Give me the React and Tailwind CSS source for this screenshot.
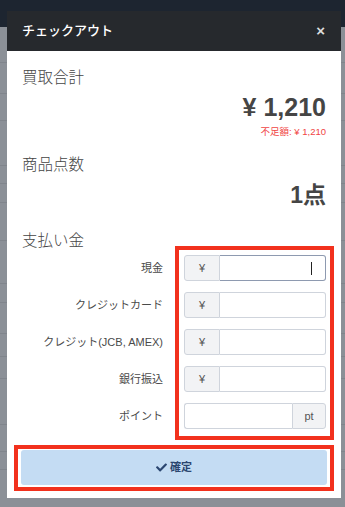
import React from "react";
import { FaCheck } from "react-icons/fa";

const font = { fontFamily: '"Liberation Sans", "Noto Sans CJK JP", sans-serif' };

function Row({ label, addon = "¥", after = false, focused = false }) {
  return (
    <div className="flex items-center h-[26px]">
      <div className="w-[141px] text-right text-[11px] text-[#4a4a4a]">{label}</div>
      <div className="ml-[21px] flex h-[26px] w-[142px]">
        {!after && (
          <div className="w-[36px] flex items-center justify-center bg-[#f2f3f5] border border-[#cfd4dc] rounded-l-[3px] text-[11px] text-[#555]">
            {addon}
          </div>
        )}
        <div
          className={
            "flex-1 relative border " +
            (focused ? "border-[#8e9ab0] " : "border-[#cfd4dc] ") +
            (after ? "rounded-l-[3px] border-r-0" : "rounded-r-[3px] border-l-0")
          }
        >
          {focused && <div className="absolute right-[13px] top-[6px] w-px h-[13px] bg-[#222]" />}
        </div>
        {after && (
          <div className="w-[34px] flex items-center justify-center bg-[#f2f3f5] border border-[#cfd4dc] rounded-r-[3px] text-[11px] text-[#555]">
            {addon}
          </div>
        )}
      </div>
    </div>
  );
}

export default function App() {
  return (
    <div className="relative w-[345px] h-[507px] overflow-hidden bg-[#8b9097]" style={font}>
      <div className="h-[27px] bg-[#1d2530]" />
      <div className="flex flex-col">
        {[62, 93, 120, 165, 183, 202, 240, 283, 302, 333, 356, 378, 424, 451, 469].map((y, i) => (
          <div key={i} className="absolute left-0 right-0 h-px bg-[#80858c]" style={{ top: y }} />
        ))}
      </div>

      <div className="absolute left-[7px] top-[11px] w-[334px] bg-white">
        <div className="h-[40px] bg-[#26292d] flex items-center justify-between px-[15px]">
          <span className="text-[13px] text-white font-medium">チェックアウト</span>
          <span className="text-[15px] text-[#ddd] font-bold mr-[1px]">×</span>
        </div>
        <div className="px-[15px] pt-[15px] pb-[13px]">
          <div className="text-[15.5px] leading-[24px] text-[#444] font-light">買取合計</div>
          <div className="text-right text-[25px] font-bold leading-[32px] text-[#454545] mt-[1px]">¥ 1,210</div>
          <div className="text-right text-[9.5px] leading-[12px] text-[#f04444] mt-[3px]">不足額: ¥ 1,210</div>
          <div className="text-[15.5px] leading-[24px] text-[#444] font-light mt-[15px]">商品点数</div>
          <div className="text-right text-[23px] font-bold leading-[32px] text-[#454545] mt-[2px]">1点</div>
          <div className="text-[15.5px] leading-[24px] text-[#444] font-light mt-[18px]">支払い金</div>
          <div className="flex flex-col gap-[11px] mt-[2px]">
            <Row label="現金" focused />
            <Row label="クレジットカード" />
            <Row label="クレジット(JCB, AMEX)" />
            <Row label="銀行振込" />
            <Row label="ポイント" addon="pt" after />
          </div>
          <div className="mt-[21px] -mx-[1px] h-[35px] bg-[#c4dcf3] rounded-[3px] flex items-center justify-center gap-[3px] text-[11px] font-bold text-[#2b4670]">
            <FaCheck className="w-[11px] h-[11px]" />
            <span>確定</span>
          </div>
        </div>

        <div className="absolute left-[168px] top-[235px] w-[159px] h-[194px] border-4 border-[#f2311d] pointer-events-none" />
        <div className="absolute left-[7px] top-[434px] w-[320px] h-[46px] border-4 border-[#f2311d] pointer-events-none" />
      </div>
    </div>
  );
}
